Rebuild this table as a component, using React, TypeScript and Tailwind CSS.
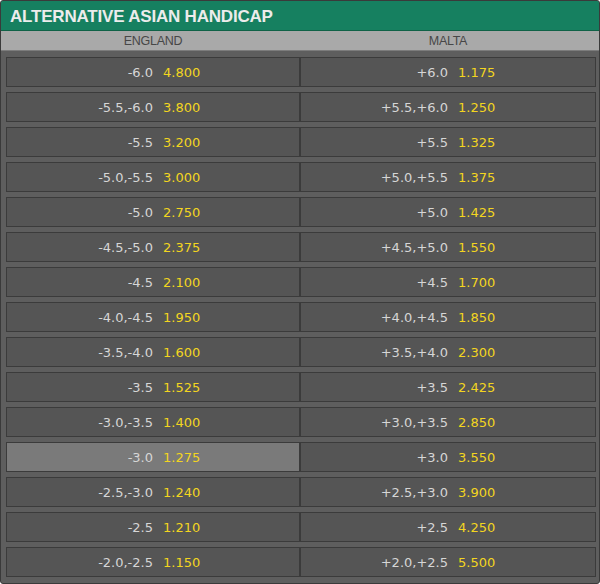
const rows = [
  ['-6.0', '4.800', '+6.0', '1.175'],
  ['-5.5,-6.0', '3.800', '+5.5,+6.0', '1.250'],
  ['-5.5', '3.200', '+5.5', '1.325'],
  ['-5.0,-5.5', '3.000', '+5.0,+5.5', '1.375'],
  ['-5.0', '2.750', '+5.0', '1.425'],
  ['-4.5,-5.0', '2.375', '+4.5,+5.0', '1.550'],
  ['-4.5', '2.100', '+4.5', '1.700'],
  ['-4.0,-4.5', '1.950', '+4.0,+4.5', '1.850'],
  ['-3.5,-4.0', '1.600', '+3.5,+4.0', '2.300'],
  ['-3.5', '1.525', '+3.5', '2.425'],
  ['-3.0,-3.5', '1.400', '+3.0,+3.5', '2.850'],
  ['-3.0', '1.275', '+3.0', '3.550'],
  ['-2.5,-3.0', '1.240', '+2.5,+3.0', '3.900'],
  ['-2.5', '1.210', '+2.5', '4.250'],
  ['-2.0,-2.5', '1.150', '+2.0,+2.5', '5.500'],
]

// la cellule sélectionnée (England -3.0)
const SELECTED = 11

function Cell({ line, odds, active }: { line: string; odds: string; active?: boolean }) {
  return (
    <div
      className={`flex h-[30px] items-center border border-[#3b3b3b] pt-px ${
        active ? 'bg-[#7a7a7a]' : 'bg-[#555555]'
      }`}
    >
      <div className="w-1/2 text-right text-[#d6d6d6]">{line}</div>
      <div className="w-1/2 pl-[10px] text-left text-[#f3d51f]">{odds}</div>
    </div>
  )
}

export default function App() {
  return (
    <div className="flex h-[584px] w-[600px] flex-col overflow-hidden rounded-[3px] border border-[#3a3a3a] bg-[#5e5e5e]">
      <div
        className="flex h-[30px] shrink-0 items-center border-b border-[#0f6247] bg-[#168060] pl-[9px] pt-[2px] text-[17px] font-bold tracking-[-0.2px] text-[#ececec]"
        style={{ fontFamily: '"Liberation Sans", Arial, sans-serif' }}
      >
        ALTERNATIVE ASIAN HANDICAP
      </div>
      <div
        className="flex h-[20px] shrink-0 items-center border-b border-[#7c7c7c] bg-[#a9a9a9] pl-[5px] pr-[3px] pt-[2px] text-[12.5px] tracking-[-0.3px] text-[#474747]"
        style={{ fontFamily: '"Liberation Sans", Arial, sans-serif' }}
      >
        <div className="w-[294px] text-center">ENGLAND</div>
        <div className="w-[296px] text-center">MALTA</div>
      </div>
      <div
        className="flex flex-col gap-[5px] pb-[6px] pl-[5px] pr-[3px] pt-[6px] text-[13px]"
        style={{ fontFamily: '"DejaVu Sans", Verdana, sans-serif' }}
      >
        {rows.map((r, i) => (
          <div key={i} className="flex">
            <div className="w-[294px]">
              <Cell line={r[0]} odds={r[1]} active={i === SELECTED} />
            </div>
            <div className="w-[296px]">
              <Cell line={r[2]} odds={r[3]} />
            </div>
          </div>
        ))}
      </div>
    </div>
  )
}
